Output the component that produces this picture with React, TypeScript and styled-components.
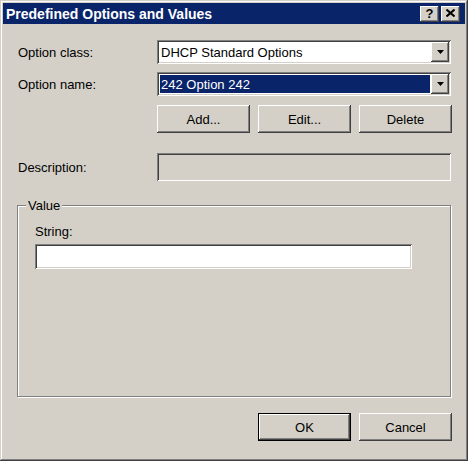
import styled, { createGlobalStyle } from "styled-components";

const GlobalStyle = createGlobalStyle`
  html, body {
    margin: 0;
    padding: 0;
    background: #d4d0c8;
  }
  body {
    font-family: "Liberation Sans", Arial, sans-serif;
    font-size: 13px;
    color: #000;
  }
`;

const raised = `
  box-shadow: inset -1px -1px 0 #404040, inset 1px 1px 0 #fff,
    inset -2px -2px 0 #808080, inset 2px 2px 0 #d4d0c8;
`;

const sunken = `
  box-shadow: inset 1px 1px 0 #808080, inset -1px -1px 0 #fff,
    inset 2px 2px 0 #404040, inset -2px -2px 0 #d4d0c8;
`;

const Window = styled.div`
  width: 468px;
  height: 461px;
  box-sizing: border-box;
  padding: 3px;
  background: #d4d0c8;
  box-shadow: inset -1px -1px 0 #404040, inset 1px 1px 0 #d4d0c8,
    inset -2px -2px 0 #808080, inset 2px 2px 0 #fff;
  display: flex;
  flex-direction: column;
`;

const TitleBar = styled.div`
  height: 21px;
  flex: none;
  background: #0a246a;
  color: #fff;
  font-weight: bold;
  font-size: 14px;
  display: flex;
  align-items: center;
  justify-content: space-between;
  padding: 0 5px 0 3px;
`;

const CaptionButtons = styled.div`
  display: flex;
  gap: 2px;
`;

const CaptionButton = styled.div`
  width: 19px;
  height: 16px;
  box-sizing: border-box;
  background: #d4d0c8;
  ${raised}
  display: flex;
  align-items: center;
  justify-content: center;
  color: #000;
  font-weight: bold;
  font-size: 13px;
  line-height: 1;
  padding-bottom: 1px;
`;

const Body = styled.div`
  display: flex;
  flex-direction: column;
  padding: 16px 13px 0 15px;
`;

const FieldRow = styled.div<{ $mt?: number; $h: number }>`
  display: grid;
  grid-template-columns: 139px 295px;
  align-items: center;
  height: ${(p) => p.$h}px;
  margin-top: ${(p) => p.$mt ?? 0}px;
`;

const Label = styled.span`
  line-height: 15px;
`;

const Combo = styled.div`
  height: 24px;
  width: 294px;
  box-sizing: border-box;
  padding: 2px;
  background: #fff;
  ${sunken}
  display: flex;
`;

const ComboText = styled.div<{ $selected?: boolean }>`
  flex: 1;
  margin: 1px;
  padding: 0 1px;
  display: flex;
  align-items: center;
  background: ${(p) => (p.$selected ? "#0a246a" : "transparent")};
  color: ${(p) => (p.$selected ? "#fff" : "#000")};
  white-space: nowrap;
`;

const DropButton = styled.div`
  width: 18px;
  flex: none;
  background: #d4d0c8;
  ${raised}
  display: flex;
  align-items: center;
  justify-content: center;
`;

const ButtonGroup = styled.div`
  display: flex;
  gap: 8px;
`;

const Button = styled.button<{ $default?: boolean }>`
  width: 93px;
  height: 28px;
  padding: 0;
  border: none;
  background: #d4d0c8;
  font: inherit;
  color: #000;
  ${(p) =>
    p.$default
      ? `box-shadow: inset 0 0 0 1px #000, inset -2px -2px 0 #404040, inset 2px 2px 0 #fff,
          inset -3px -3px 0 #808080;`
      : raised}
`;

const DisabledField = styled.div`
  width: 294px;
  height: 28px;
  box-sizing: border-box;
  background: #d4d0c8;
  ${sunken}
`;

const GroupBox = styled.div`
  position: relative;
  margin-top: 24px;
  margin-left: -1px;
  width: 434px;
  height: 192px;
  box-sizing: border-box;
  border: 1px solid #808080;
  box-shadow: 1px 1px 0 #fff, inset 1px 1px 0 #fff;
  padding: 18px 17px 0 17px;
  display: flex;
  flex-direction: column;
`;

const Legend = styled.span`
  position: absolute;
  top: -8px;
  left: 8px;
  padding: 0 2px;
  background: #d4d0c8;
  line-height: 15px;
`;

const TextInput = styled.div`
  width: 377px;
  height: 25px;
  box-sizing: border-box;
  margin-top: 5px;
  background: #fff;
  ${sunken}
`;

const Footer = styled.div`
  display: flex;
  justify-content: flex-end;
  gap: 8px;
  margin-top: 16px;
`;

const Arrow = () => (
  <svg width="7" height="4" viewBox="0 0 7 4">
    <polygon points="0,0 7,0 3.5,4" fill="#000" />
  </svg>
);

const CloseGlyph = () => (
  <svg width="9" height="8" viewBox="0 0 9 8">
    <path d="M0.5 0.5 L8.5 7.5 M8.5 0.5 L0.5 7.5" stroke="#000" strokeWidth="2" />
  </svg>
);

export default function App() {
  return (
    <>
      <GlobalStyle />
      <Window>
        <TitleBar>
          <span>Predefined Options and Values</span>
          <CaptionButtons>
            <CaptionButton>?</CaptionButton>
            <CaptionButton>
              <CloseGlyph />
            </CaptionButton>
          </CaptionButtons>
        </TitleBar>
        <Body>
          <FieldRow $h={24}>
            <Label>Option class:</Label>
            <Combo>
              <ComboText>DHCP Standard Options</ComboText>
              <DropButton>
                <Arrow />
              </DropButton>
            </Combo>
          </FieldRow>
          <FieldRow $h={24} $mt={8}>
            <Label>Option name:</Label>
            <Combo>
              <ComboText $selected>242 Option 242</ComboText>
              <DropButton>
                <Arrow />
              </DropButton>
            </Combo>
          </FieldRow>
          <FieldRow $h={28} $mt={9}>
            <span />
            <ButtonGroup>
              <Button>Add...</Button>
              <Button>Edit...</Button>
              <Button>Delete</Button>
            </ButtonGroup>
          </FieldRow>
          <FieldRow $h={28} $mt={20}>
            <Label>Description:</Label>
            <DisabledField />
          </FieldRow>
          <GroupBox>
            <Legend>Value</Legend>
            <Label>String:</Label>
            <TextInput />
          </GroupBox>
          <Footer>
            <Button $default>OK</Button>
            <Button>Cancel</Button>
          </Footer>
        </Body>
      </Window>
    </>
  );
}
